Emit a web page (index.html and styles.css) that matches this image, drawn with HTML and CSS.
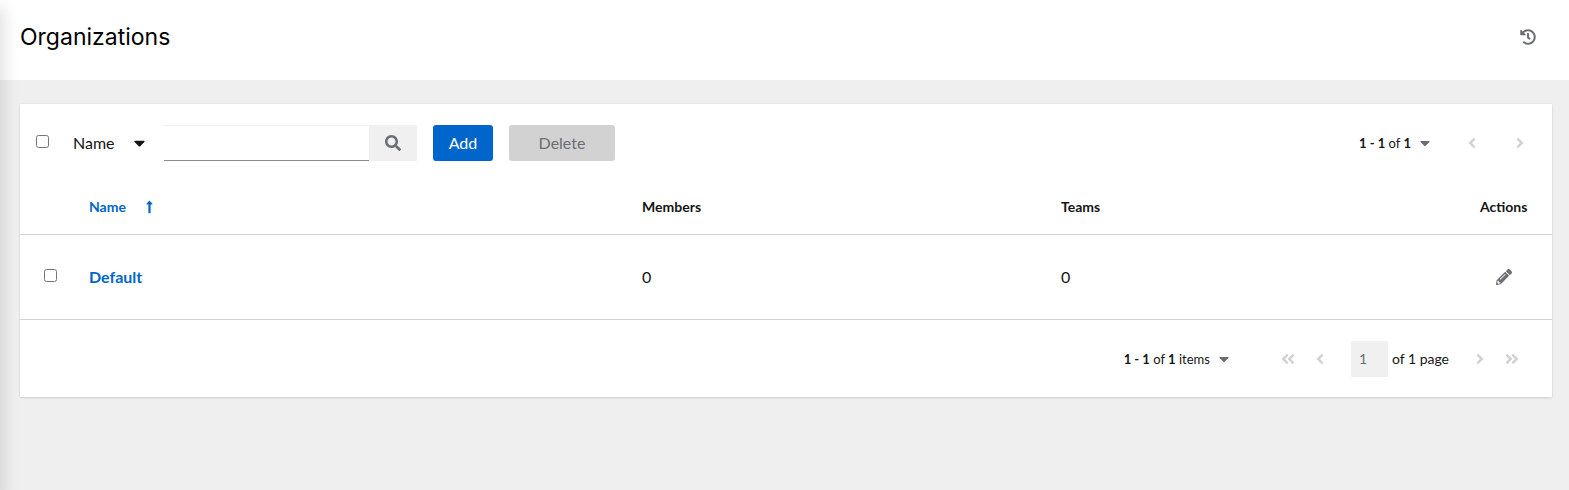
FILE: index.html
```html
<!DOCTYPE html>
<html lang="en">
<head>
<meta charset="utf-8">
<title>Organizations</title>
<link rel="stylesheet" href="styles.css">
</head>
<body>
<svg class="sprite" aria-hidden="true">
  <symbol id="history" viewBox="0 0 512 512"><path d="M504 255.531c.253 136.64-111.18 248.372-247.82 248.468-59.015.042-113.223-20.53-155.822-54.911-11.077-8.94-11.905-25.541-1.839-35.607l11.267-11.267c8.609-8.609 22.353-9.551 31.891-1.984C173.062 425.135 212.781 440 256 440c101.705 0 184-82.311 184-184 0-101.705-82.311-184-184-184-48.814 0-93.149 18.969-126.068 49.932l50.754 50.754c10.08 10.08 2.941 27.314-11.313 27.314H24c-8.837 0-16-7.163-16-16V38.627c0-14.254 17.234-21.393 27.314-11.314l49.372 49.372C129.209 34.136 189.552 8 256 8c136.81 0 247.747 110.78 248 247.531zm-180.912 78.784l9.823-12.63c8.138-10.463 6.253-25.542-4.21-33.679L288 256.349V152c0-13.255-10.745-24-24-24h-16c-13.255 0-24 10.745-24 24v135.651l65.409 50.874c10.463 8.137 25.541 6.253 33.679-4.21z"/></symbol>
  <symbol id="search" viewBox="0 0 512 512"><path d="M505 442.7L405.3 343c-4.5-4.5-10.6-7-17-7H372c27.6-35.3 44-79.7 44-128C416 93.1 322.9 0 208 0S0 93.1 0 208s93.1 208 208 208c48.3 0 92.7-16.4 128-44v16.3c0 6.4 2.5 12.5 7 17l99.7 99.7c9.4 9.4 24.6 9.4 33.9 0l28.3-28.3c9.4-9.4 9.4-24.6.1-34zM208 336c-70.7 0-128-57.2-128-128 0-70.7 57.2-128 128-128 70.7 0 128 57.2 128 128 0 70.7-57.2 128-128 128z"/></symbol>
  <symbol id="pencil" viewBox="0 0 512 512"><path d="M497.9 142.1l-46.1 46.1c-4.7 4.7-12.3 4.7-17 0l-111-111c-4.7-4.7-4.7-12.3 0-17l46.1-46.1c18.7-18.7 49.1-18.7 67.9 0l60.1 60.1c18.8 18.7 18.8 49.1 0 67.9zM284.2 99.8L21.6 362.4.4 483.9c-2.9 16.4 11.4 30.6 27.8 27.8l121.5-21.3 262.6-262.6c4.7-4.7 4.7-12.3 0-17l-111-111c-4.8-4.7-12.4-4.7-17.1 0zM124.1 339.9c-5.5-5.5-5.5-14.3 0-19.8l154-154c5.5-5.5 14.3-5.5 19.8 0s5.5 14.3 0 19.8l-154 154c-5.5 5.5-14.3 5.5-19.8 0zM88 424h48v36.3l-64.5 11.3-31.1-31.1L51.7 376H88v48z"/></symbol>
  <symbol id="caret" viewBox="0 0 320 512"><path d="M31.3 192h257.3c17.8 0 26.7 21.5 14.1 34.1L174.1 354.8c-7.8 7.8-20.5 7.8-28.3 0L17.2 226.1C4.6 213.5 13.5 192 31.3 192z"/></symbol>
  <symbol id="arrow-up" viewBox="0 0 256 512"><path d="M88 166.059V468c0 6.627 5.373 12 12 12h56c6.627 0 12-5.373 12-12V166.059h46.059c21.382 0 32.09-25.851 16.971-40.971l-86.059-86.059c-9.373-9.373-24.569-9.373-33.941 0l-86.059 86.059c-15.119 15.119-4.411 40.971 16.971 40.971H88z"/></symbol>
  <symbol id="prev" viewBox="0 0 256 512"><path d="M31.7 239l136-136c9.4-9.4 24.6-9.4 33.9 0l22.6 22.6c9.4 9.4 9.4 24.6 0 33.9L127.9 256l96.4 96.4c9.4 9.4 9.4 24.6 0 33.9L201.7 409c-9.4 9.4-24.6 9.4-33.9 0l-136-136c-9.5-9.4-9.5-24.6-.1-34z"/></symbol>
  <symbol id="next" viewBox="0 0 256 512"><path transform="matrix(-1 0 0 1 256 0)" d="M31.7 239l136-136c9.4-9.4 24.6-9.4 33.9 0l22.6 22.6c9.4 9.4 9.4 24.6 0 33.9L127.9 256l96.4 96.4c9.4 9.4 9.4 24.6 0 33.9L201.7 409c-9.4 9.4-24.6 9.4-33.9 0l-136-136c-9.5-9.4-9.5-24.6-.1-34z"/></symbol>
  <symbol id="first" viewBox="0 0 448 512"><use href="#prev" width="256" height="512"/><use href="#prev" x="192" width="256" height="512"/></symbol>
  <symbol id="last" viewBox="0 0 448 512"><use href="#next" width="256" height="512"/><use href="#next" x="192" width="256" height="512"/></symbol>
</svg>

<header class="page-header">
  <h1 class="page-title">Organizations</h1>
  <button class="icon-button" type="button" aria-label="View activity stream"><svg class="icon"><use href="#history"/></svg></button>
</header>

<main class="page-main">
  <section class="card">
    <div class="toolbar">
      <input class="check" type="checkbox" aria-label="Select all">
      <button class="filter" type="button">Name<svg class="caret"><use href="#caret"/></svg></button>
      <form class="search">
        <input class="search-input" type="text" aria-label="Search text input">
        <button class="search-button" type="button" aria-label="Search"><svg class="icon"><use href="#search"/></svg></button>
      </form>
      <button class="button button-primary" type="button">Add</button>
      <button class="button button-disabled" type="button" disabled>Delete</button>
      <div class="pager pager-top">
        <button class="range" type="button"><span><b>1 - 1</b> of <b>1</b></span><svg class="caret"><use href="#caret"/></svg></button>
        <button class="step step-wide" type="button" disabled aria-label="Previous page"><svg class="angle"><use href="#prev"/></svg></button>
        <button class="step step-wide" type="button" disabled aria-label="Next page"><svg class="angle"><use href="#next"/></svg></button>
      </div>
    </div>

    <table class="table">
      <thead>
        <tr>
          <th class="col-check"></th>
          <th class="col-name"><button class="sort" type="button">Name<svg class="arrow"><use href="#arrow-up"/></svg></button></th>
          <th>Members</th>
          <th>Teams</th>
          <th class="col-actions">Actions</th>
        </tr>
      </thead>
      <tbody>
        <tr>
          <td class="col-check"><input class="check" type="checkbox" aria-label="Select Default"></td>
          <td><a class="link" href="#">Default</a></td>
          <td>0</td>
          <td>0</td>
          <td class="col-actions"><button class="icon-button" type="button" aria-label="Edit Organization"><svg class="icon"><use href="#pencil"/></svg></button></td>
        </tr>
      </tbody>
    </table>

    <footer class="pager pager-bottom">
      <button class="range" type="button"><span><b>1 - 1</b> of <b>1</b> items</span><svg class="caret"><use href="#caret"/></svg></button>
      <button class="step" type="button" disabled aria-label="First page"><svg class="angle"><use href="#first"/></svg></button>
      <button class="step" type="button" disabled aria-label="Previous page"><svg class="angle"><use href="#prev"/></svg></button>
      <label class="page-of"><input class="page-input" type="text" value="1" disabled aria-label="Current page"><span>of 1 page</span></label>
      <button class="step" type="button" disabled aria-label="Next page"><svg class="angle"><use href="#next"/></svg></button>
      <button class="step" type="button" disabled aria-label="Last page"><svg class="angle"><use href="#last"/></svg></button>
    </footer>
  </section>
</main>
</body>
</html>
```
FILE: styles.css
```css
* {
  box-sizing: border-box;
}

body {
  margin: 0;
  min-height: 100vh;
  background: #efefef;
  color: #151515;
  font: 16px/24px Lato, sans-serif;
}

body::before {
  content: "";
  position: fixed;
  top: 0;
  bottom: -20px;
  left: -40px;
  width: 40px;
  box-shadow: 12px 0 16px -8px rgba(3, 3, 3, 0.12);
}

button,
input {
  margin: 0;
  border: 0;
  border-radius: 0;
  font: inherit;
  color: inherit;
}

button {
  padding: 0;
  background: none;
  cursor: pointer;
}

button:disabled {
  cursor: default;
}

svg {
  display: block;
  flex: none;
  fill: currentColor;
}

.sprite {
  display: none;
}

.icon {
  width: 16px;
  height: 16px;
}

.caret {
  width: 10px;
  height: 16px;
}

.page-header {
  display: flex;
  align-items: center;
  justify-content: space-between;
  height: 80px;
  padding: 0 17px 6px 20px;
  background: #fff;
}

.page-title {
  margin: 0;
  color: #000;
  font: 400 23px/32px Inter, sans-serif;
}

.icon-button {
  display: block;
  padding: 6px 16px;
  color: #6a6e73;
}

.page-main {
  padding: 24px 17px 24px 20px;
}

.card {
  background: #fff;
  box-shadow: 0 1px 2px rgba(3, 3, 3, 0.12), 0 0 2px rgba(3, 3, 3, 0.06);
}

.toolbar {
  display: flex;
  align-items: center;
  padding: 21px 8px 19px 16px;
}

.check {
  display: block;
  width: 13px;
  height: 13px;
  margin-bottom: 3px;
}

.filter {
  display: flex;
  align-items: center;
  justify-content: space-between;
  width: 115px;
  height: 36px;
  padding: 0 19px 0 24px;
}

.filter .caret {
  width: 11px;
  height: 18px;
}

.search {
  display: flex;
  margin-right: 16px;
}

.search-input {
  width: 205px;
  height: 36px;
  padding: 0 8px;
  border-top: 1px solid #f0f0f0;
  border-bottom: 1px solid #8a8d90;
  background: #fff;
}

.search-button {
  display: grid;
  place-items: center;
  width: 48px;
  background: #f0f0f0;
  color: #6a6e73;
}

.button {
  height: 36px;
  margin-right: 16px;
  border-radius: 3px;
}

.button-primary {
  width: 60px;
  background: #06c;
  color: #fff;
}

.button-disabled {
  width: 106px;
  background: #d2d2d2;
  color: #6a6e73;
}

.pager {
  display: flex;
  align-items: center;
  font-size: 14px;
}

.pager-top {
  margin-left: auto;
}

.range {
  display: flex;
  align-items: center;
  gap: 9px;
  margin-right: 18px;
  font-size: 13px;
}

.range b {
  font-weight: 700;
}

.range .caret {
  color: #6a6e73;
}

.step {
  display: grid;
  place-items: center;
  width: 32px;
  height: 36px;
  color: #d2d2d2;
}

.step-wide {
  width: 48px;
}

.angle {
  width: 14px;
  height: 16px;
}

.table {
  width: 100%;
  table-layout: fixed;
  border-collapse: collapse;
}

.table th,
.table td {
  padding: 0;
  border-bottom: 1px solid #d2d2d2;
  text-align: left;
}

.table th {
  height: 54px;
  font-size: 14px;
  font-weight: 700;
}

.table td {
  height: 85px;
}

.table .col-check {
  width: 69px;
  padding-left: 24px;
}

.col-name {
  width: 36.1%;
}

.col-actions {
  width: 72px;
}

.sort {
  display: flex;
  align-items: center;
  gap: 20px;
  color: #06c;
}

.arrow {
  width: 7px;
  height: 14px;
}

.link {
  color: #06c;
  font-weight: 700;
  text-decoration: none;
}

.pager-bottom {
  justify-content: flex-end;
  padding: 21px 24px 20px;
}

.pager-bottom .range {
  margin-right: 43px;
}

.page-of {
  display: flex;
  align-items: center;
  gap: 4px;
  margin: 0 15px;
}

.page-input {
  width: 37px;
  height: 36px;
  padding: 0 8px;
  background: #f0f0f0;
  color: #6a6e73;
}
```
